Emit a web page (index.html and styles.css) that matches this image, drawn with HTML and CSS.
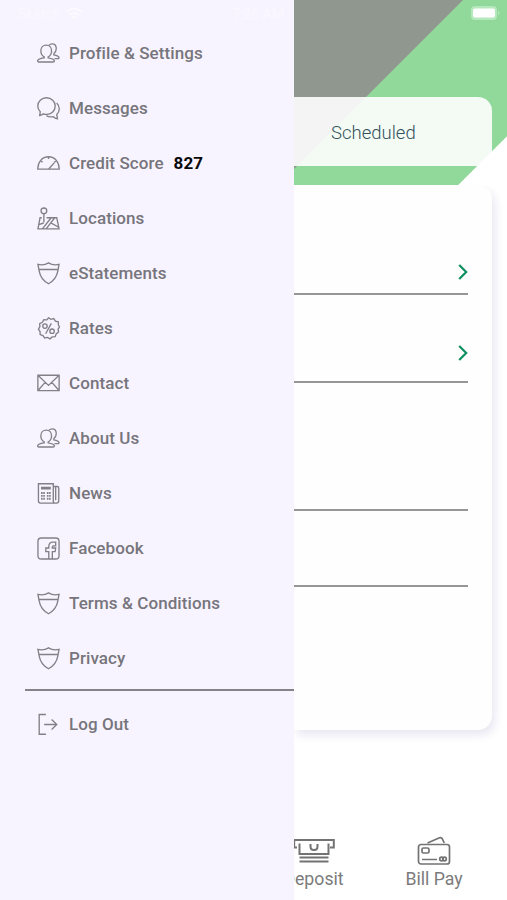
FILE: index.html
```html
<!DOCTYPE html>
<html lang="en">
<head>
<meta charset="utf-8">
<title>Menu</title>
<link rel="stylesheet" href="styles.css">
</head>
<body>
<svg class="sprite" aria-hidden="true">
  <symbol id="people" viewBox="0 0 24 24">
    <path d="M7.600 15.600C5.300 14.200 4 11.700 4 9.300c0-3.700 2.400-6 5.600-6s5.600 2.300 5.600 6c0 2.400-1.300 4.900-3.600 6.300v.9c3.300.7 5.800 1.200 6.400 2.700.3 1.100-.2 1.700-1.200 1.700H2c-1 0-1.500-.6-1.200-1.700.6-1.500 3.500-2 6.800-2.700z"/>
    <path d="M12.600 3.400c.9-1.100 1.900-1.500 3.100-1.500 2.700 0 4.400 1.900 4.400 4.900 0 2.200-1 4.100-2.500 5.300v1.300c2.700.6 4.900 1.200 5.300 2.600.2.900-.3 1.300-1 1.300h-3.600"/>
  </symbol>
  <symbol id="chat" viewBox="0 0 24 24">
    <path d="M2.800 19.300l.6-4C1.800 13.800.8 11.800.8 9.500.8 4.600 4.700.8 9.900.8s9.100 3.800 9.100 8.700-3.900 8.700-9.100 8.700c-1.200 0-2.200-.2-3.200-.6-1.100 1-2.400 1.600-3.900 1.700z"/>
    <path d="M20.500 6.200c3.600 3.400 3.700 8.800.1 12l.7 4.600c-1.800-.2-3.300-1-4.300-2.300-2.700.6-5.200.2-7.200-1.100"/>
  </symbol>
  <symbol id="gauge" viewBox="0 0 24 24">
    <path d="M.8 17.800C1 10 5.400 5 12 5s11 5 11.200 12.800z"/>
    <path d="M12 5v2.200M4.300 9.300l1.500 1.400M19.700 9.300l-1.600 1.400M12.200 17.800l6-6.700"/>
  </symbol>
  <symbol id="map" viewBox="0 0 24 24">
    <circle cx="7.200" cy="4" r="3"/><path d="M7.200 7v9M5 11.200H3.200L1 22.800h22l-2.400-11.600H10M1.800 18.300l5.200-1.600M5.600 22.800l9.200-11.600M9.500 22.800l9-11.600M14.500 16.600l8.100 4.500"/>
  </symbol>
  <symbol id="shield" viewBox="0 0 24 24">
    <path d="M1 2.500c4 .9 8 .3 11-1.600 3 1.900 7 2.500 11 1.600l-1.300 7c-1.100 6.300-4.300 10.200-9.700 13.200-5.400-3-8.600-6.900-9.700-13.200zM1.900 7.800h20.200"/>
  </symbol>
  <symbol id="rate" viewBox="0 0 24 24">
    <path d="M12 .8l2.500 1.700 3-.8 1.700 2.600 3 .8.100 3.100 1.200 2.200-1.500 2.300.5 3-2.500 1.900-1 2.900-3.100.3-2.300 2-2.600-1.500-3 .6-1.800-2.500-2.900-1.100-.1-3.100-1.700-2.500 1.500-2.700-.2-3 2.800-1.400 1.500-2.700 3.100.1z"/>
    <circle cx="8.300" cy="9.500" r="2.300"/><circle cx="15.700" cy="14.800" r="2.300"/><path d="M15 6.700L9 17.500"/>
  </symbol>
  <symbol id="mail" viewBox="0 0 24 24">
    <path d="M.9 3.400h22.200v16H.9zM1 3.500l11 10.500L23 3.500M1 19.300l7.500-8.500M23 19.300l-7.500-8.500"/>
  </symbol>
  <symbol id="news" viewBox="0 0 24 24">
    <path d="M17 20.500V1.800H1.500v18c0 1.500.8 2.200 2.200 2.200h16.600c1.500 0 2.400-.8 2.400-2.400V6.300c0-1-.6-1.600-1.600-1.600H17M17 20.500c.1 1 .7 1.500 1.600 1.500M19.500 5v14"/>
    <path d="M4.200 5.600h10.200M4.200 7h10.200"/><path class="dense" d="M4.200 11.500h4M10.300 11.500h4M4.200 14.500h4M10.300 14.500h4M4.200 17.500h4M10.300 17.500h4"/>
  </symbol>
  <symbol id="facebook" viewBox="0 0 24 24">
    <rect x="1" y="1" width="22" height="22" rx="3.500"/>
    <path d="M12.300 23v-7.700H9.200v-3.800h3.100V9.800c0-3 1.600-4.500 4.300-4.500h2.900v3.900h-2.200c-.9 0-1.300.4-1.300 1.200v1.100h3.500l-.6 3.800H16V23"/>
  </symbol>
  <symbol id="logout" viewBox="0 0 24 24">
    <path d="M9.300 1.600H2.300v20.600h7M7.500 12h13M15.300 6.800l5.300 5.200-5.300 5.200"/>
  </symbol>
</svg>

<div class="screen">
  <aside class="drawer">
    <div class="status">
      <span>Sketch</span>
      <svg class="wifi" viewBox="0 0 18 14"><path d="M1 5q8-7 16 0M4 8q5-4 10 0M7 11q2-2 4 0"/></svg>
      <time>7:26 AM</time>
    </div>
    <nav class="menu">
      <a class="item"><svg class="icon"><use href="#people"/></svg>Profile &amp; Settings</a>
      <a class="item"><svg class="icon"><use href="#chat"/></svg>Messages</a>
      <a class="item"><svg class="icon"><use href="#gauge"/></svg>Credit Score<b class="score">827</b></a>
      <a class="item"><svg class="icon"><use href="#map"/></svg>Locations</a>
      <a class="item"><svg class="icon"><use href="#shield"/></svg>eStatements</a>
      <a class="item"><svg class="icon"><use href="#rate"/></svg>Rates</a>
      <a class="item"><svg class="icon"><use href="#mail"/></svg>Contact</a>
      <a class="item"><svg class="icon"><use href="#people"/></svg>About Us</a>
      <a class="item"><svg class="icon"><use href="#news"/></svg>News</a>
      <a class="item"><svg class="icon"><use href="#facebook"/></svg>Facebook</a>
      <a class="item"><svg class="icon"><use href="#shield"/></svg>Terms &amp; Conditions</a>
      <a class="item"><svg class="icon"><use href="#shield"/></svg>Privacy</a>
    </nav>
    <a class="item logout"><svg class="icon"><use href="#logout"/></svg>Log Out</a>
  </aside>

  <main class="page">
    <header class="hero">
      <svg class="battery" viewBox="0 0 30 14"><rect class="shell" x="0" y="0" width="26" height="14" rx="4"/><rect class="charge" x="2" y="2.500" width="22" height="9" rx="2"/><path class="shell" d="M27 4.500q3 2.500 0 5z"/></svg>
      <div class="tab">Scheduled</div>
    </header>
    <section class="card">
      <div class="row first"><svg class="chevron" viewBox="0 0 10 16"><path d="M1.200 1l7 7-7 7"/></svg></div>
      <div class="row second"><svg class="chevron" viewBox="0 0 10 16"><path d="M1.200 1l7 7-7 7"/></svg></div>
      <div class="row third"></div>
      <div class="row fourth"></div>
    </section>
    <footer class="tabbar">
      <a class="action deposit">
        <svg viewBox="0 0 42 28"><path d="M4 9.500H1.200V2h39.600v7.500H37M6.500 5.500V16h29V5.500M17.500 6v2.500q0 3.500 3.500 3.500t3.500-3.500V6"/><path d="M6.500 19.500h29M6.500 23.500h29"/></svg>
        <span>Deposit</span>
      </a>
      <a class="action bill">
        <svg viewBox="0 0 34 30"><rect x="1.500" y="8.500" width="31" height="19.500" rx="2.500"/><rect x="5" y="12" width="7" height="5" rx="1.500"/><path d="M5 23.500h15M10.500 7l12-5.200q1.800-.7 2.800 1l2 4.200"/><circle cx="24.500" cy="23" r="1.800"/><circle cx="27.500" cy="23" r="1.800"/></svg>
        <span>Bill Pay</span>
      </a>
    </footer>
  </main>
</div>
</body>
</html>
```
FILE: styles.css
```css
* { box-sizing: border-box; }

body {
  margin: 0;
  font-family: Roboto, "Liberation Sans", sans-serif;
  background: #fff;
}

svg {
  fill: none;
  stroke: #828087;
  stroke-width: 1.4;
}

.sprite { display: none; }

.screen {
  display: grid;
  grid-template-columns: 294px 213px;
  height: 900px;
  overflow: hidden;
}

.drawer {
  background: #f7f4ff;
  padding-left: 25px;
}

.status {
  display: flex;
  align-items: center;
  height: 26px;
  padding: 2px 10px 0 0;
  gap: 5px;
  color: #faf8ff;
  font-size: 14px;
}

.status span { margin-left: -7px; }
.status time { margin-left: auto; }

.wifi {
  width: 18px;
  height: 14px;
  stroke: #fcfaff;
  stroke-width: 2;
}

.menu {
  height: 665px;
  border-bottom: 2px solid #85838a;
}

.item {
  display: flex;
  align-items: center;
  height: 55px;
  padding: 0 0 2px 12px;
  color: #77757c;
  font-size: 17px;
  font-weight: 500;
  letter-spacing: .08px;
}

.icon {
  width: 23px;
  height: 23px;
  margin: 1px 9px 0 0;
}

.dense {
  stroke-width: 1.9;
  stroke-dasharray: 1.7 .6;
}

.score {
  margin-left: 10px;
  color: #080808;
  font-weight: 700;
}

.logout { margin-top: 6px; }

.page {
  display: flex;
  flex-direction: column;
  overflow: hidden;
}

.hero {
  height: 185px;
  padding-top: 6px;
  background: linear-gradient(135deg, #90978f 119px, #90d99b 120px, #90d99b 246.500px, #fff 247.500px);
}

.battery {
  display: block;
  width: 30px;
  height: 14px;
  margin-left: 177px;
  stroke: none;
}

.shell { fill: #b5e8bd; }
.charge { fill: #fff; }

.tab {
  width: 198px;
  height: 69px;
  margin-top: 77px;
  padding-left: 37px;
  border-radius: 0 14px 0 0;
  background: rgba(255, 255, 255, .89);
  color: #34525d;
  font-size: 18.500px;
  font-weight: 300;
  line-height: 72px;
}

.card {
  width: 198px;
  height: 545px;
  border-radius: 0 14px 14px 0;
  background: #fefefe;
  box-shadow: 3px 5px 10px 0 #e8e7f2;
  clip-path: inset(0 -20px -25px 0);
}

.row {
  width: 174px;
  border-bottom: 2px solid #969696;
}

.first { height: 110px; padding-top: 79px; }
.second { height: 88px; padding-top: 50px; }
.third { height: 128px; }
.fourth { height: 76px; }

.chevron {
  display: block;
  width: 10px;
  height: 16px;
  margin-left: 163.500px;
  stroke: #0e8f60;
  stroke-width: 2.200;
}

.tabbar {
  display: flex;
  margin-top: 106px;
}

.action {
  display: flex;
  flex: none;
  flex-direction: column;
  align-items: center;
  width: 120px;
  color: #7b7b7b;
  font-size: 17.700px;
  line-height: 26px;
}

.action svg {
  stroke: #737373;
  stroke-width: 1.700;
}

.deposit { margin-left: -40.500px; }
.bill { margin-left: .5px; }

.deposit svg {
  width: 42px;
  height: 28px;
  margin-top: 2px;
}

.deposit svg path { stroke-width: 2; }

.bill svg {
  width: 34px;
  height: 30px;
}
```
